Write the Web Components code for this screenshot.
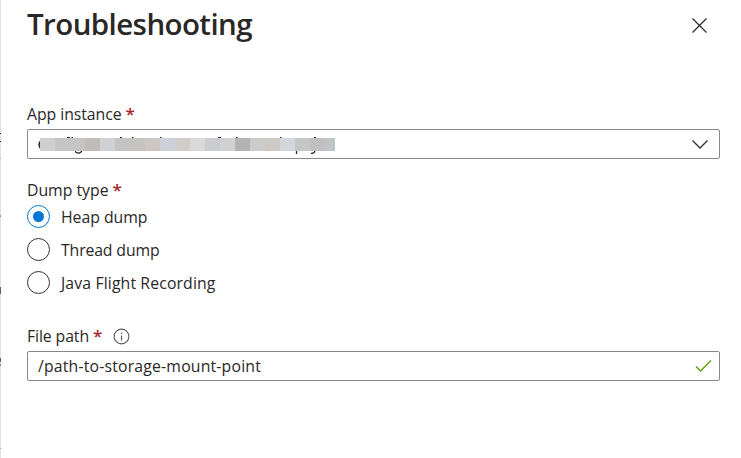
<!DOCTYPE html>
<html lang="en"><head><meta charset="utf-8"><title>Troubleshooting</title>
<style>html,body{margin:0;background:#fff}body{height:458px;overflow:hidden;font-family:"Open Sans","Noto Sans",sans-serif;color:#292827}</style></head>
<body>
<dump-panel></dump-panel>
<script>
// Text whose tracking is adjusted to fill the given width.
class FitText extends HTMLElement{
  constructor(){super();this.attachShadow({mode:'open'}).innerHTML='<style>:host{display:inline-block;white-space:pre}span{display:inline-block}</style><span><slot></slot></span>';}
  connectedCallback(){
    const s=this.shadowRoot.querySelector('span'),w=+this.getAttribute('width'),n=this.textContent.length;
    s.style.letterSpacing=((w-s.getBoundingClientRect().width)/n)+'px';
  }
}
class FieldLabel extends HTMLElement{
  constructor(){super();this.attachShadow({mode:'open'}).innerHTML=`<style>
  :host{display:flex;height:22px;line-height:22px;font-size:15.8px;align-items:center}
  b{color:#a4262c;font-weight:600;font-size:17px;margin-left:4px;width:9px;line-height:22px}
  ::slotted(svg){margin-left:11px}
  </style><slot></slot><b>*</b><slot name="info"></slot>`;}
}
class FieldBox extends HTMLElement{
  constructor(){super();this.attachShadow({mode:'open'}).innerHTML=`<style>
  :host{display:flex;box-sizing:border-box;width:693px;height:30px;border:1px solid #8a8886;border-radius:2px;align-items:center;justify-content:space-between;padding:0 0 0 10px;font-size:15.8px;line-height:28px}
  svg{display:block}</style><slot></slot><slot name="icon"></slot>`;}
}
class RadioOption extends HTMLElement{
  constructor(){super();this.attachShadow({mode:'open'}).innerHTML=`<style>
  :host{display:flex;height:33px;align-items:center;font-size:15.8px;line-height:22px;gap:11px}
  i{box-sizing:border-box;width:23px;height:23px;border:1px solid #323130;border-radius:50%;display:grid;place-items:center}
  :host([checked]) i{border-color:#0078d4}
  :host([checked]) i::after{content:"";width:11px;height:11px;border-radius:50%;background:#0078d4}
  </style><i></i><slot></slot>`;}
}
// Redacted value: mosaic strip with the edges of the covered glyphs.
class RedactedValue extends HTMLElement{
  constructor(){super();
    const c=[[0,15,'#cfcfd1'],[15,30,'#c6c5c6'],[45,15,'#bfbcba'],[60,15,'#d0d1d4'],[75,30,'#c5c4c3'],[105,15,'#cdc7c3'],[120,15,'#cdd1d9'],[135,15,'#d0cec9'],[150,15,'#d9d9d9'],[165,15,'#cccdd0'],[180,15,'#d1d1d1'],[195,15,'#b3b3b3'],[210,15,'#cccccd'],[225,15,'#cec9c4'],[240,15,'#d3d7dd'],[255,15,'#c6c6c6'],[270,15,'#c1bfc1'],[285,10,'#c2c5c6']];
    this.attachShadow({mode:'open'}).innerHTML=`<style>:host,svg{display:block}</style>
    <svg width="299" height="20" viewBox="38 134 299 20"><g fill="none" stroke="#292827" stroke-width="1">
    <path stroke-width="1.500" d="M41 140.500q-4 4 0 8.500"/><path d="M67 137.500h3M71.500 137.500h1.500M120 137.500h2M132 137.500h1.500M160 137.500h1.500M218 137.500h3M236 137.500h1.500M280 137.500h1.500M314 137.500h2"/><path stroke-width="1.300" d="M75 151.500q3.500 3.500 7-.5M296.500 151v3M311 153.300q3 .5 4-2.300"/></g>
    ${c.map(([x,w,f])=>`<rect x="${40+x}" y="138" width="${w}" height="13" fill="${f}" shape-rendering="crispEdges"/>`).join('')}</svg>`;}
}
class DumpPanel extends HTMLElement{
  constructor(){super();this.attachShadow({mode:'open'}).innerHTML=`<style>
  :host{display:grid;grid-template-columns:1px 1fr;column-gap:26px;height:458px}
  .edge{background:#e3e3e3}
  .edge svg{display:block}
  header{display:flex;justify-content:space-between;width:693px;height:50px}
  h1{margin:3px 0 0;font-size:29.5px;line-height:42px;font-weight:600}
  header svg{margin:17px 12px 0 0}
  field-label.a{margin-top:53px}field-box.a{margin-top:4px}
  field-label.b{margin-top:20px;margin-bottom:-1px}
  field-label.c{margin-top:26px}field-box.c{margin-top:4px}
  </style>
  <div class="edge"><svg width="1" height="458"><path d="M0 133h1v1h-1zM0 141h1v1h-1z" fill="#222"/><path d="M0 158h1v1h-1zM0 448h1v1h-1z" fill="#aaa"/><path d="M0 215h1v1h-1z" fill="#c89470"/><path d="M0 216h1v1h-1z" fill="#559cda"/><path d="M0 287h1v7h-1zM0 358h1v4h-1z" fill="#76564d"/><path d="M0 364h1v2h-1z" fill="#778caa"/></svg></div>
  <main>
  <header><h1><fit-text width="225">Troubleshooting</fit-text></h1><svg width="17" height="17"><path d="M1.500 1.500 15.500 15.500M15.500 1.500 1.500 15.500" stroke="#292827" stroke-width="1.200"/></svg></header>
  <field-label class="a"><fit-text width="94.500">App instance</fit-text></field-label>
  <field-box class="a"><redacted-value></redacted-value><svg slot="icon" width="18" height="12" style="margin-right:10px"><path d="M1.500 2.500 9 10 16.500 2.500" fill="none" stroke="#323130" stroke-width="1.300"/></svg></field-box>
  <field-label class="b"><fit-text width="81.500">Dump type</fit-text></field-label>
  <radio-option checked><fit-text width="86.500">Heap dump</fit-text></radio-option>
  <radio-option><fit-text width="98.500">Thread dump</fit-text></radio-option>
  <radio-option><fit-text width="154.500">Java Flight Recording</fit-text></radio-option>
  <field-label class="c"><fit-text width="62">File path</fit-text><svg slot="info" width="17" height="17"><circle cx="8.500" cy="8.500" r="7.400" fill="none" stroke="#605e5c" stroke-width="1.100"/><path d="M8.500 7.500v5M8.500 4.500v1.400" stroke="#605e5c" stroke-width="1.200"/></svg></field-label>
  <field-box class="c"><fit-text width="223">/path-to-storage-mount-point</fit-text><svg slot="icon" width="18" height="14" style="margin-right:7px"><path d="M2 7.500 6.500 12 17 1.500" fill="none" stroke="#57a300" stroke-width="1.400"/></svg></field-box>
  </main>`;}
}
customElements.define('fit-text',FitText);
customElements.define('field-label',FieldLabel);
customElements.define('field-box',FieldBox);
customElements.define('radio-option',RadioOption);
customElements.define('redacted-value',RedactedValue);
customElements.define('dump-panel',DumpPanel);
</script></body></html>
